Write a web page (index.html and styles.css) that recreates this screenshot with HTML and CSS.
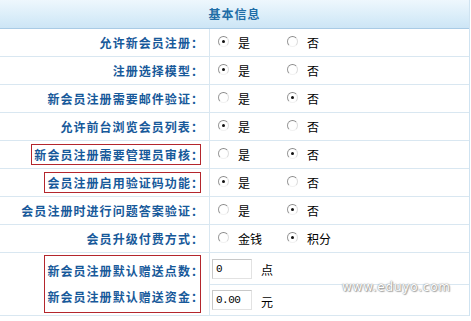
FILE: index.html
```html
<!DOCTYPE html>
<html lang="zh-CN">
<head>
<meta charset="utf-8">
<title>基本信息</title>
<link rel="stylesheet" href="styles.css">
</head>
<body>
<div class="panel">
  <div class="head">基本信息</div>
  <div class="grid">
    <div class="lab"><span class="txt">允许新会员注册<span class="c">：</span></span></div>
    <div class="val"><label class="opt"><i class="radio on"></i>是</label><label class="opt"><i class="radio"></i>否</label></div>

    <div class="lab"><span class="txt">注册选择模型<span class="c">：</span></span></div>
    <div class="val"><label class="opt"><i class="radio on"></i>是</label><label class="opt"><i class="radio"></i>否</label></div>

    <div class="lab"><span class="txt">新会员注册需要邮件验证<span class="c">：</span></span></div>
    <div class="val"><label class="opt"><i class="radio"></i>是</label><label class="opt"><i class="radio on"></i>否</label></div>

    <div class="lab"><span class="txt">允许前台浏览会员列表<span class="c">：</span></span></div>
    <div class="val"><label class="opt"><i class="radio on"></i>是</label><label class="opt"><i class="radio"></i>否</label></div>

    <div class="lab"><span class="txt boxed">新会员注册需要管理员审核<span class="c">：</span></span></div>
    <div class="val"><label class="opt"><i class="radio"></i>是</label><label class="opt"><i class="radio on"></i>否</label></div>

    <div class="lab"><span class="txt boxed">会员注册启用验证码功能<span class="c">：</span></span></div>
    <div class="val"><label class="opt"><i class="radio on"></i>是</label><label class="opt"><i class="radio"></i>否</label></div>

    <div class="lab"><span class="txt">会员注册时进行问题答案验证<span class="c">：</span></span></div>
    <div class="val"><label class="opt"><i class="radio"></i>是</label><label class="opt"><i class="radio on"></i>否</label></div>

    <div class="lab"><span class="txt">会员升级付费方式<span class="c">：</span></span></div>
    <div class="val"><label class="opt"><i class="radio"></i>金钱</label><label class="opt"><i class="radio on"></i>积分</label></div>

    <div class="lab span2">
      <div class="group">
        <span class="gl">新会员注册默认赠送点数<span class="c">：</span></span>
        <span class="gl">新会员注册默认赠送资金<span class="c">：</span></span>
      </div>
    </div>
    <div class="val tall first"><span class="field">0</span><span class="unit">点</span></div>
    <div class="val tall"><span class="field">0.00</span><span class="unit">元</span></div>
  </div>
  <div class="mark">www.eduyo.com</div>
</div>
</body>
</html>
```
FILE: styles.css
```css
html, body {
  margin: 0;
  padding: 0;
  background: #ffffff;
}
body {
  font-family: "Noto Sans CJK SC", "Noto Sans", sans-serif;
  font-size: 12px;
  color: #000;
}
.panel {
  position: relative;
  width: 469px;
  border-right: 1px solid #cfe3f1;
}
.head {
  height: 28px;
  line-height: 28px;
  text-align: center;
  font-weight: bold;
  font-size: 12px;
  letter-spacing: 1px;
  color: #1f6da6;
  background: linear-gradient(#eef7fd, #d6ebf8 70%, #cde5f5);
  border-bottom: 1px solid #a9cbe5;
}
.grid {
  display: grid;
  grid-template-columns: 210px 1fr;
  grid-template-rows: repeat(8, 28px) 32px 31px;
}
.lab, .val {
  border-bottom: 1px solid #d9e7f1;
  box-sizing: border-box;
  display: flex;
  align-items: center;
}
.lab {
  justify-content: flex-end;
  padding-right: 8px;
  border-right: 1px solid #d9e7f1;
}
.txt, .gl {
  font-weight: bold;
  color: #17599a;
  letter-spacing: 1.05px;
  line-height: 15px;
  padding: 2px 0 2px 2px;
  border: 1px solid transparent;
  white-space: nowrap;
  flex: none;
}
.c {
  margin-right: -4px;
}
.boxed {
  border-color: #b4262d;
}
.val {
  padding-left: 8px;
}
.opt {
  display: flex;
  align-items: center;
  width: 69px;
  white-space: nowrap;
}
.radio {
  display: inline-block;
  flex: none;
  width: 11px;
  height: 11px;
  box-sizing: border-box;
  border-radius: 50%;
  border: 1px solid;
  border-color: #8a8a8a #dcdcdc #f2f2f2 #9a9a9a;
  background: #fff;
  margin: -3px 9px 0 0;
  position: relative;
}
.radio.on::after {
  content: "";
  position: absolute;
  left: 3px;
  top: 3px;
  width: 3px;
  height: 3px;
  border-radius: 50%;
  background: #111;
}
.span2 {
  grid-row: span 2;
}
.group {
  display: flex;
  flex-direction: column;
  align-items: flex-end;
  border: 1px solid #b4262d;
  padding: 2px 0;
}
.group .gl {
  border: 0;
  line-height: 20px;
  padding: 3px 0 3px 2px;
}
.tall {
  padding-left: 2px;
}
.field {
  display: inline-block;
  width: 40px;
  height: 20px;
  box-sizing: border-box;
  border: 1px solid;
  border-color: #c8c8c8 #e2e2e2 #e2e2e2 #c8c8c8;
  font-family: "Liberation Mono", monospace;
  font-size: 11px;
  line-height: 18px;
  padding-left: 3px;
  letter-spacing: -0.5px;
}
.unit {
  margin-left: 9px;
  padding-top: 2px;
}
.mark {
  position: absolute;
  left: 342px;
  top: 280px;
  font-family: "DejaVu Sans", sans-serif;
  font-size: 12px;
  letter-spacing: 0.8px;
  color: #ffffff;
  text-shadow: 0 0 1px #888, 0 0 2px #999, 1px 1px 1px #aaa;
}
```
